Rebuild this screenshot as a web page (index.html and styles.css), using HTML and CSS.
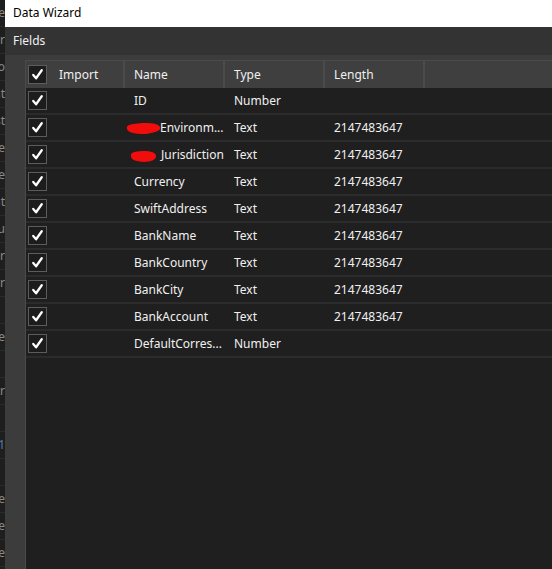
FILE: index.html
```html
<!DOCTYPE html>
<html lang="en">
  <head>
    <meta charset="UTF-8" />
    <title>Data Wizard</title>
    <link rel="stylesheet" href="styles.css">
  </head>
  <body>
    <div class="screen">
      <!-- window behind the dialog -->
      <div class="behind">
        <div class="behind-line">le</div>
        <div class="behind-line">rr</div>
        <div class="behind-line">Co</div>
        <div class="behind-line">at</div>
        <div class="behind-line">st</div>
        <div class="behind-line">ne</div>
        <div class="behind-line">ue</div>
        <div class="behind-line">nt</div>
        <div class="behind-line">Lu</div>
        <div class="behind-line">er</div>
        <div class="behind-line">rr</div>
        <div class="behind-line"></div>
        <div class="behind-line">ce</div>
        <div class="behind-line"></div>
        <div class="behind-line">tr</div>
        <div class="behind-line"></div>
        <div class="behind-line blue">r1</div>
        <div class="behind-line"></div>
        <div class="behind-line">te</div>
        <div class="behind-line">ce</div>
        <div class="behind-line">re</div>
      </div>

      <div class="dialog">
        <div class="titlebar">Data Wizard</div>
        <div class="fields-bar">Fields</div>

        <div class="dialog-body">
          <div class="grid">
            <div class="grid-row grid-header">
              <div class="cell cell-import">
                <span class="check"><svg viewBox="0 0 18 18"><polyline points="4.5,9.5 7.5,13 13.5,4.5" /></svg></span>
                <span>Import</span>
              </div>
              <div class="cell">Name</div>
              <div class="cell">Type</div>
              <div class="cell">Length</div>
              <div class="cell cell-fill"></div>
            </div>

            <div class="grid-row">
              <div class="cell cell-import"><span class="check"><svg viewBox="0 0 18 18"><polyline points="4.5,9.5 7.5,13 13.5,4.5" /></svg></span></div>
              <div class="cell">ID</div>
              <div class="cell">Number</div>
              <div class="cell"></div>
              <div class="cell cell-fill"></div>
            </div>

            <div class="grid-row">
              <div class="cell cell-import"><span class="check"><svg viewBox="0 0 18 18"><polyline points="4.5,9.5 7.5,13 13.5,4.5" /></svg></span></div>
              <div class="cell"><span class="redact redact-a"></span>Environm...</div>
              <div class="cell">Text</div>
              <div class="cell">2147483647</div>
              <div class="cell cell-fill"></div>
            </div>

            <div class="grid-row">
              <div class="cell cell-import"><span class="check"><svg viewBox="0 0 18 18"><polyline points="4.5,9.5 7.5,13 13.5,4.5" /></svg></span></div>
              <div class="cell"><span class="redact redact-b"></span>Jurisdiction</div>
              <div class="cell">Text</div>
              <div class="cell">2147483647</div>
              <div class="cell cell-fill"></div>
            </div>

            <div class="grid-row">
              <div class="cell cell-import"><span class="check"><svg viewBox="0 0 18 18"><polyline points="4.5,9.5 7.5,13 13.5,4.5" /></svg></span></div>
              <div class="cell">Currency</div>
              <div class="cell">Text</div>
              <div class="cell">2147483647</div>
              <div class="cell cell-fill"></div>
            </div>

            <div class="grid-row">
              <div class="cell cell-import"><span class="check"><svg viewBox="0 0 18 18"><polyline points="4.5,9.5 7.5,13 13.5,4.5" /></svg></span></div>
              <div class="cell">SwiftAddress</div>
              <div class="cell">Text</div>
              <div class="cell">2147483647</div>
              <div class="cell cell-fill"></div>
            </div>

            <div class="grid-row">
              <div class="cell cell-import"><span class="check"><svg viewBox="0 0 18 18"><polyline points="4.5,9.5 7.5,13 13.5,4.5" /></svg></span></div>
              <div class="cell">BankName</div>
              <div class="cell">Text</div>
              <div class="cell">2147483647</div>
              <div class="cell cell-fill"></div>
            </div>

            <div class="grid-row">
              <div class="cell cell-import"><span class="check"><svg viewBox="0 0 18 18"><polyline points="4.5,9.5 7.5,13 13.5,4.5" /></svg></span></div>
              <div class="cell">BankCountry</div>
              <div class="cell">Text</div>
              <div class="cell">2147483647</div>
              <div class="cell cell-fill"></div>
            </div>

            <div class="grid-row">
              <div class="cell cell-import"><span class="check"><svg viewBox="0 0 18 18"><polyline points="4.5,9.5 7.5,13 13.5,4.5" /></svg></span></div>
              <div class="cell">BankCity</div>
              <div class="cell">Text</div>
              <div class="cell">2147483647</div>
              <div class="cell cell-fill"></div>
            </div>

            <div class="grid-row">
              <div class="cell cell-import"><span class="check"><svg viewBox="0 0 18 18"><polyline points="4.5,9.5 7.5,13 13.5,4.5" /></svg></span></div>
              <div class="cell">BankAccount</div>
              <div class="cell">Text</div>
              <div class="cell">2147483647</div>
              <div class="cell cell-fill"></div>
            </div>

            <div class="grid-row">
              <div class="cell cell-import"><span class="check"><svg viewBox="0 0 18 18"><polyline points="4.5,9.5 7.5,13 13.5,4.5" /></svg></span></div>
              <div class="cell">DefaultCorres...</div>
              <div class="cell">Number</div>
              <div class="cell"></div>
              <div class="cell cell-fill"></div>
            </div>
          </div>
        </div>
      </div>
    </div>
  </body>
</html>
```

FILE: styles.css
```css
/* 基础 */
* {
  margin: 0;
  padding: 0;
  box-sizing: border-box;
}

body {
  background: #1e1e1e;
  font-family: "Noto Sans", "Open Sans", sans-serif;
  font-size: 12px;
  color: #f0f0f0;
  overflow: hidden;
}

.screen {
  display: flex;
  width: 552px;
  height: 569px;
  overflow: hidden;
}

/* 后面的窗口 */
.behind {
  width: 5px;
  flex-shrink: 0;
  background: #1e1e1e;
  overflow: hidden;
  display: flex;
  flex-direction: column;
  align-items: flex-end;
}

.behind-line {
  height: 27px;
  line-height: 26px;
  white-space: nowrap;
  color: #8a8a8a;
  border-bottom: 1px solid #2a2a2a;
  width: 5px;
  direction: rtl;
  text-align: left;
}

.behind-line.blue {
  color: #4e7fb3;
}

/* 对话框 */
.dialog {
  flex: 1;
  display: flex;
  flex-direction: column;
  min-width: 0;
}

.titlebar {
  height: 27px;
  flex-shrink: 0;
  background: #ffffff;
  color: #000000;
  padding-left: 8px;
  line-height: 25px;
}

.fields-bar {
  height: 28px;
  flex-shrink: 0;
  background: #333333;
  padding-left: 8px;
  line-height: 28px;
}

.dialog-body {
  flex: 1;
  display: flex;
  background: #3c3c3c;
  padding: 5px 0 0 20px;
}

.grid {
  flex: 1;
  background: #1f1f1f;
  border-top: 1px solid #4a4a4a;
  border-left: 1px solid #4a4a4a;
}

.grid-row {
  display: flex;
  height: 27px;
  border-bottom: 2px solid #2b2b2b;
}

.grid-header {
  background: #3f3f3f;
  border-bottom: none;
}

.cell {
  width: 100px;
  flex-shrink: 0;
  padding-left: 9px;
  display: flex;
  align-items: center;
  white-space: nowrap;
  overflow: hidden;
}

.grid-header .cell {
  border-right: 2px solid #4b4b4b;
}

.cell-import {
  width: 99px;
}

.grid-header .cell-import {
  padding-left: 2px;
  gap: 12px;
}

.grid-row .cell-import {
  padding-left: 2px;
}

.grid-header .cell-fill {
  border-right: none;
}

.cell-fill {
  flex: 1;
}

/* 复选框 */
.check {
  width: 19px;
  height: 19px;
  border: 1px solid #5c5c5c;
  background: #1c1c1c;
  display: inline-flex;
  flex-shrink: 0;
}

.check svg {
  width: 17px;
  height: 17px;
}

.check polyline {
  fill: none;
  stroke: #ffffff;
  stroke-width: 2.4;
  stroke-linecap: round;
  stroke-linejoin: round;
}

/* 涂掉的名字 */
.redact {
  display: inline-block;
  height: 11px;
  background: #f20d0d;
  border-radius: 30% 60% 45% 70%;
  transform: rotate(-5deg);
}

.redact-a {
  width: 33px;
  margin: 2px 0 0 -7px;
}

.redact-b {
  width: 25px;
  margin: 4px 5px 0 -3px;
}
```
